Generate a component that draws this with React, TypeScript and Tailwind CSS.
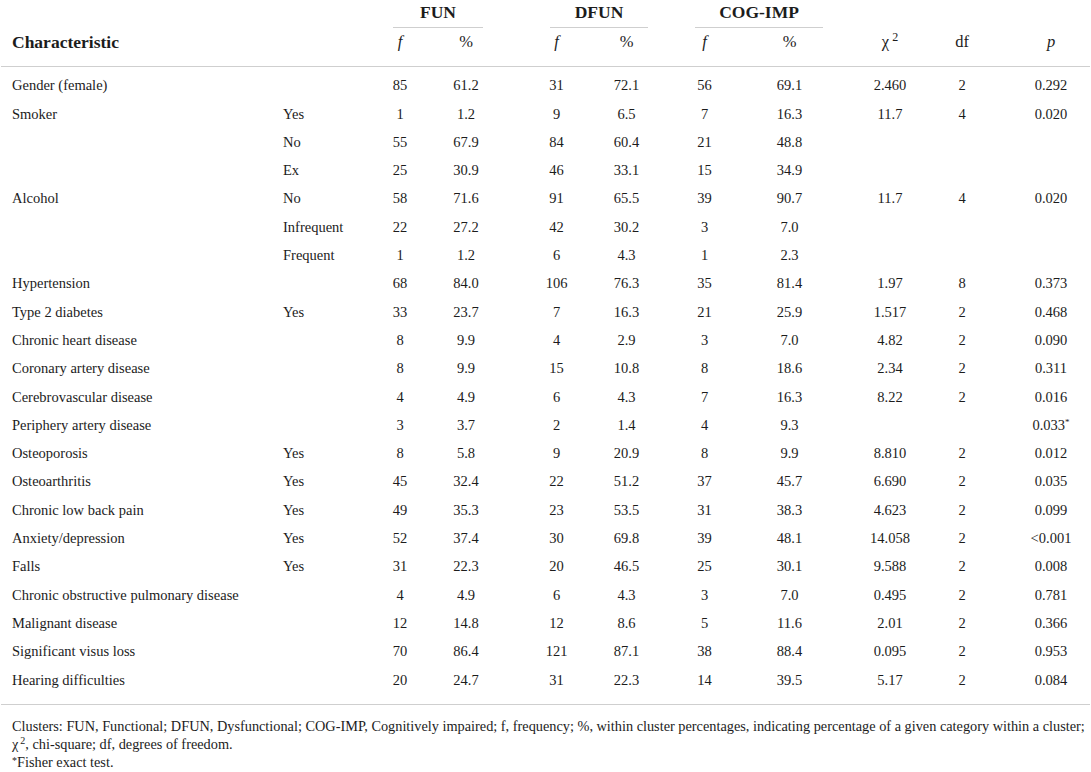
import React from "react";

type Row = {
    name: string;
    sub?: string;
    v: string[];
};

const rows: Row[] = [
    {name: "Gender (female)", v: ["85", "61.2", "31", "72.1", "56", "69.1", "2.460", "2", "0.292"]},
    {name: "Smoker", sub: "Yes", v: ["1", "1.2", "9", "6.5", "7", "16.3", "11.7", "4", "0.020"]},
    {name: "", sub: "No", v: ["55", "67.9", "84", "60.4", "21", "48.8", "", "", ""]},
    {name: "", sub: "Ex", v: ["25", "30.9", "46", "33.1", "15", "34.9", "", "", ""]},
    {name: "Alcohol", sub: "No", v: ["58", "71.6", "91", "65.5", "39", "90.7", "11.7", "4", "0.020"]},
    {name: "", sub: "Infrequent", v: ["22", "27.2", "42", "30.2", "3", "7.0", "", "", ""]},
    {name: "", sub: "Frequent", v: ["1", "1.2", "6", "4.3", "1", "2.3", "", "", ""]},
    {name: "Hypertension", v: ["68", "84.0", "106", "76.3", "35", "81.4", "1.97", "8", "0.373"]},
    {name: "Type 2 diabetes", sub: "Yes", v: ["33", "23.7", "7", "16.3", "21", "25.9", "1.517", "2", "0.468"]},
    {name: "Chronic heart disease", v: ["8", "9.9", "4", "2.9", "3", "7.0", "4.82", "2", "0.090"]},
    {name: "Coronary artery disease", v: ["8", "9.9", "15", "10.8", "8", "18.6", "2.34", "2", "0.311"]},
    {name: "Cerebrovascular disease", v: ["4", "4.9", "6", "4.3", "7", "16.3", "8.22", "2", "0.016"]},
    {name: "Periphery artery disease", v: ["3", "3.7", "2", "1.4", "4", "9.3", "", "", "0.033*"]},
    {name: "Osteoporosis", sub: "Yes", v: ["8", "5.8", "9", "20.9", "8", "9.9", "8.810", "2", "0.012"]},
    {name: "Osteoarthritis", sub: "Yes", v: ["45", "32.4", "22", "51.2", "37", "45.7", "6.690", "2", "0.035"]},
    {name: "Chronic low back pain", sub: "Yes", v: ["49", "35.3", "23", "53.5", "31", "38.3", "4.623", "2", "0.099"]},
    {name: "Anxiety/depression", sub: "Yes", v: ["52", "37.4", "30", "69.8", "39", "48.1", "14.058", "2", "<0.001"]},
    {name: "Falls", sub: "Yes", v: ["31", "22.3", "20", "46.5", "25", "30.1", "9.588", "2", "0.008"]},
    {name: "Chronic obstructive pulmonary disease", v: ["4", "4.9", "6", "4.3", "3", "7.0", "0.495", "2", "0.781"]},
    {name: "Malignant disease", v: ["12", "14.8", "12", "8.6", "5", "11.6", "2.01", "2", "0.366"]},
    {name: "Significant visus loss", v: ["70", "86.4", "121", "87.1", "38", "88.4", "0.095", "2", "0.953"]},
    {name: "Hearing difficulties", v: ["20", "24.7", "31", "22.3", "14", "39.5", "5.17", "2", "0.084"]},
];

// per-column nudges so the centred numbers sit where the printed table has them
const numCls = [
    "text-center pr-[5px]",
    "text-center pr-[14px]",
    "text-center pl-[8px]",
    "text-center pr-[7px]",
    "text-center pr-[7px]",
    "text-center pr-[11px]",
    "text-center pl-[12px]",
    "text-center pr-[11px]",
    "text-center pl-[2px]",
];

const grid = "grid grid-cols-[275px_95px_63px_78px_81px_74px_82px_92px_86px_81px_84px]";
const line = "border-[#cfcfcf]";

function Cell({value, cls}: {value: string; cls: string}) {
    if (value.endsWith("*")) {
        return (
            <div className={cls}>
                {value.slice(0, -1)}
                <span className="text-[9px] leading-none align-[5px]">*</span>
            </div>
        );
    }
    return <div className={cls}>{value}</div>;
}

function Group({label, pad, width}: {label: string; pad: string; width: string}) {
    return (
        <div className={"col-span-2 " + pad}>
            <div className={width + " text-center text-[17.5px] font-bold leading-[20px] pt-[1px] pb-[5px] border-b-[1.5px] " + line}>
                {label}
            </div>
        </div>
    );
}

export default function App() {
    return (
        <div className="w-[1091px] h-[772px] bg-white text-[#1c1c1c] font-['Liberation_Serif',serif] overflow-hidden">
            {/* header */}
            <div className={grid + " pt-[1px]"}>
                <div className="col-span-2"/>
                <Group label="FUN" pad="pl-[23px]" width="w-[90px]"/>
                <Group label="DFUN" pad="pl-[39px]" width="w-[98px]"/>
                <Group label="COG-IMP" pad="pl-[29px]" width="w-[128px]"/>
                <div className="col-span-3"/>
            </div>
            <div className={grid + " items-center h-[39px] pb-[9px] text-[16.5px] border-b-[1.5px] mx-[1px] " + line}>
                <div className="col-span-2 pl-[11px] font-bold text-[17.5px]">Characteristic</div>
                <div className={numCls[0] + " italic"}>f</div>
                <div className={numCls[1]}>%</div>
                <div className={numCls[2] + " italic"}>f</div>
                <div className={numCls[3]}>%</div>
                <div className={numCls[4] + " italic"}>f</div>
                <div className={numCls[5]}>%</div>
                <div className={numCls[6]}>
                    χ<sup className="text-[12px] leading-none ml-[3px]">2</sup>
                </div>
                <div className={numCls[7]}>df</div>
                <div className={numCls[8] + " italic"}>p</div>
            </div>

            {/* body */}
            <div className={"pt-[5px] pb-[9px] text-[14.5px] border-b-[1.5px] mx-[1px] " + line}>
                {rows.map((r, i) => (
                    <div key={i} className={grid + " h-[28.3px] items-center"}>
                        <div className="pl-[11px] whitespace-nowrap">{r.name}</div>
                        <div className="pl-[7px]">{r.sub ?? ""}</div>
                        {r.v.map((v, j) => (
                            <Cell key={j} value={v} cls={numCls[j]}/>
                        ))}
                    </div>
                ))}
            </div>

            {/* footnotes */}
            <div className="pt-[12px] pl-[12px] text-[14.3px] leading-[18px] whitespace-nowrap">
                <p>
                    Clusters: FUN, Functional; DFUN, Dysfunctional; COG-IMP, Cognitively impaired; f, frequency; %, within cluster percentages, indicating percentage of a given category within a cluster;
                </p>
                <p>
                    χ<sup className="text-[10px] leading-none ml-[2px]">2</sup>, chi-square; df, degrees of freedom.
                </p>
                <p>
                    <span className="text-[10px] leading-none align-[3px]">*</span>Fisher exact test.
                </p>
            </div>
        </div>
    );
}
